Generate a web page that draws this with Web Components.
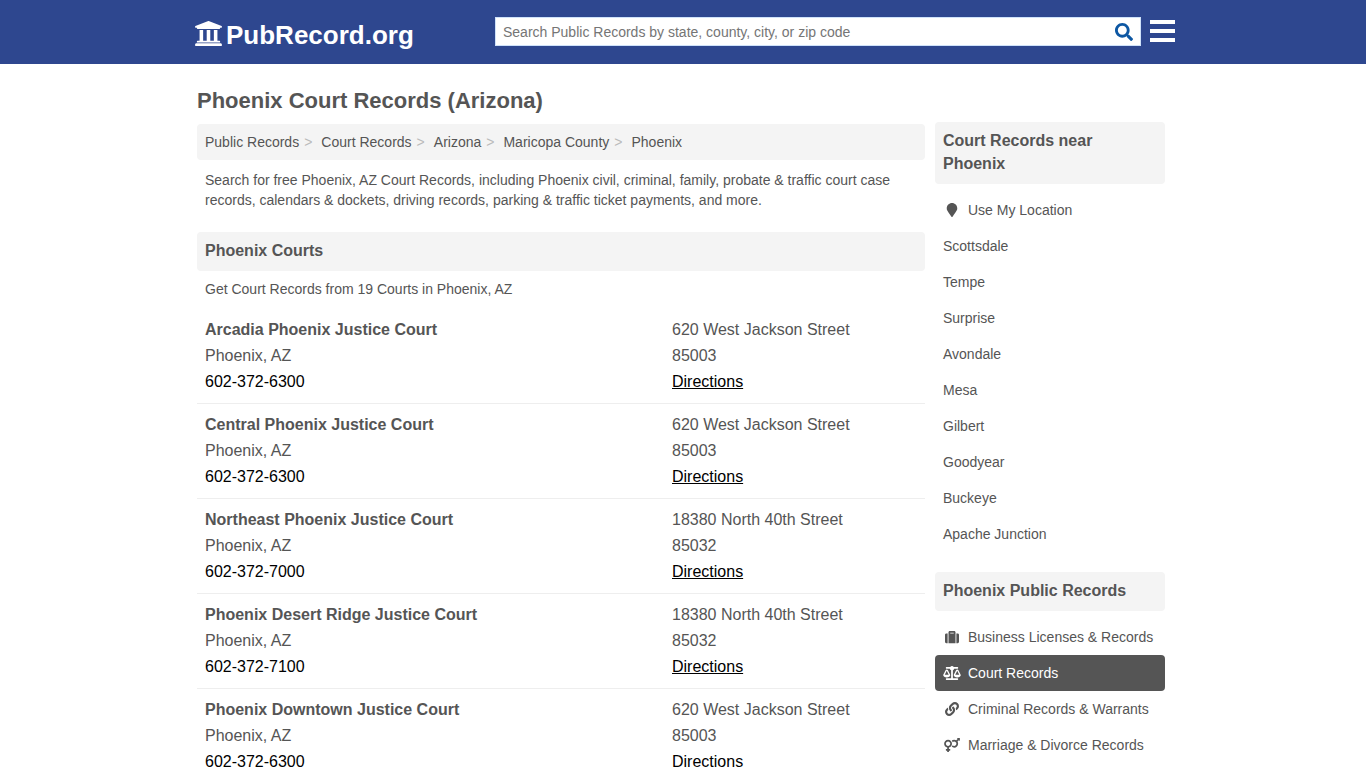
<!DOCTYPE html>
<html lang="en">
<head>
<meta charset="utf-8">
<meta name="viewport" content="width=device-width, initial-scale=1">
<title>Phoenix Court Records (Arizona)</title>
<style>
    body {
        margin: 0;
        background: #fff;
        color: #555;
        font: 14px/20px "Liberation Sans", Arial, sans-serif;
    }
</style>
</head>
<body>
<site-header></site-header>
<page-layout>
    <bread-crumbs items="Public Records|Court Records|Arizona|Maricopa County|Phoenix"></bread-crumbs>
    <text-block>Search for free Phoenix, AZ Court Records, including Phoenix civil, criminal, family, probate &amp; traffic court case records, calendars &amp; dockets, driving records, parking &amp; traffic ticket payments, and more.</text-block>
    <section-title>Phoenix Courts</section-title>
    <text-block compact>Get Court Records from 19 Courts in Phoenix, AZ</text-block>
    <court-row name="Arcadia Phoenix Justice Court" phone="602-372-6300" street="620 West Jackson Street" zip="85003"></court-row>
    <court-row name="Central Phoenix Justice Court" phone="602-372-6300" street="620 West Jackson Street" zip="85003"></court-row>
    <court-row name="Northeast Phoenix Justice Court" phone="602-372-7000" street="18380 North 40th Street" zip="85032"></court-row>
    <court-row name="Phoenix Desert Ridge Justice Court" phone="602-372-7100" street="18380 North 40th Street" zip="85032"></court-row>
    <court-row name="Phoenix Downtown Justice Court" phone="602-372-6300" street="620 West Jackson Street" zip="85003"></court-row>

    <side-menu slot="side">
        <section-title>Court Records near Phoenix</section-title>
        <menu-link icon="marker">Use My Location</menu-link>
        <menu-link>Scottsdale</menu-link>
        <menu-link>Tempe</menu-link>
        <menu-link>Surprise</menu-link>
        <menu-link>Avondale</menu-link>
        <menu-link>Mesa</menu-link>
        <menu-link>Gilbert</menu-link>
        <menu-link>Goodyear</menu-link>
        <menu-link>Buckeye</menu-link>
        <menu-link>Apache Junction</menu-link>
    </side-menu>
    <side-menu slot="side">
        <section-title>Phoenix Public Records</section-title>
        <menu-link icon="suitcase">Business Licenses &amp; Records</menu-link>
        <menu-link icon="scale" active>Court Records</menu-link>
        <menu-link icon="link">Criminal Records &amp; Warrants</menu-link>
        <menu-link icon="venusmars">Marriage &amp; Divorce Records</menu-link>
    </side-menu>
</page-layout>

<script>
// name: [viewBox, path]
const icons = {
    university: ['16 32 480 448', 'M496 128v16a8 8 0 0 1-8 8h-24v12c0 6.627-5.373 12-12 12H60c-6.627 0-12-5.373-12-12v-12H24a8 8 0 0 1-8-8v-16a8 8 0 0 1 4.941-7.392l232-88a7.996 7.996 0 0 1 6.118 0l232 88A8 8 0 0 1 496 128zm-24 304H40c-13.255 0-24 10.745-24 24v16a8 8 0 0 0 8 8h464a8 8 0 0 0 8-8v-16c0-13.255-10.745-24-24-24zM96 192v192H60c-6.627 0-12 5.373-12 12v20h416v-20c0-6.627-5.373-12-12-12h-36V192h-64v192h-64V192h-64v192h-64V192H96z'],
    search: ['0 0 512 512', 'M505 442.7L405.3 343c-4.5-4.5-10.6-7-17-7H372c27.6-35.3 44-79.7 44-128C416 93.1 322.9 0 208 0S0 93.1 0 208s93.1 208 208 208c48.3 0 92.7-16.4 128-44v16.3c0 6.4 2.5 12.5 7 17l99.7 99.7c9.4 9.4 24.6 9.4 33.9 0l28.3-28.3c9.4-9.4 9.4-24.6.1-34zM208 336c-70.7 0-128-57.2-128-128 0-70.7 57.2-128 128-128 70.7 0 128 57.2 128 128 0 70.7-57.2 128-128 128z'],
    marker: ['0 0 384 512', 'M172.268 501.67C26.97 291.031 0 269.413 0 192 0 85.961 85.961 0 192 0s192 85.961 192 192c0 77.413-26.97 99.031-172.268 309.67-9.535 13.774-29.93 13.773-39.464 0z'],
    suitcase: ['0 0 512 512', 'M128 480h256V80c0-26.5-21.5-48-48-48H176c-26.5 0-48 21.5-48 48v400zm64-384h128v32H192V96zm320 80v256c0 26.5-21.5 48-48 48h-48V128h48c26.5 0 48 21.5 48 48zM96 480H48c-26.5 0-48-21.5-48-48V176c0-26.5 21.5-48 48-48h48v352z'],
    scale: ['0 0 640 512', 'M256 336h-.02c0-16.18 1.34-8.73-85.05-181.51-17.65-35.29-68.19-35.36-85.87 0C-2.06 328.75.02 320.33.02 336H0c0 44.18 57.31 80 128 80s128-35.82 128-80zM128 176l72 144H56l72-144zm511.98 160c0-16.18 1.34-8.73-85.05-181.51-17.65-35.29-68.19-35.36-85.87 0-87.12 174.26-85.04 165.84-85.04 181.51H384c0 44.18 57.31 80 128 80s128-35.82 128-80h-.02zM440 320l72-144 72 144H440zm88 128H352V153.25c23.51-10.29 41.16-31.48 46.39-57.25H528c8.84 0 16-7.16 16-16V48c0-8.84-7.16-16-16-16H383.64C369.04 12.68 346.09 0 320 0s-49.04 12.68-63.64 32H112c-8.84 0-16 7.16-16 16v32c0 8.84 7.16 16 16 16h129.61c5.23 25.76 22.87 46.96 46.39 57.25V448H112c-8.84 0-16 7.16-16 16v32c0 8.84 7.16 16 16 16h416c8.84 0 16-7.16 16-16v-32c0-8.84-7.16-16-16-16z'],
    link: ['0 0 512 512', 'M326.612 185.391c59.747 59.809 58.927 155.698.36 214.59-.11.12-.24.25-.36.37l-67.2 67.2c-59.27 59.27-155.699 59.262-214.96 0-59.27-59.26-59.27-155.7 0-214.96l37.106-37.106c9.84-9.84 26.786-3.3 27.294 10.606.648 17.722 3.826 35.527 9.69 52.721 1.986 5.822.567 12.262-3.783 16.612l-13.087 13.087c-28.026 28.026-28.905 73.66-1.155 101.96 28.024 28.579 74.086 28.749 102.325.51l67.2-67.19c28.191-28.191 28.073-73.757 0-101.83-3.701-3.694-7.429-6.564-10.341-8.569a16.037 16.037 0 0 1-6.947-12.606c-.396-10.567 3.348-21.456 11.698-29.806l21.054-21.055c5.521-5.521 14.182-6.199 20.584-1.731a152.482 152.482 0 0 1 20.522 17.197zM467.547 44.449c-59.261-59.262-155.69-59.27-214.96 0l-67.2 67.2c-.12.12-.25.25-.36.37-58.566 58.892-59.387 154.781.36 214.59a152.454 152.454 0 0 0 20.521 17.196c6.402 4.468 15.064 3.789 20.584-1.731l21.054-21.055c8.35-8.35 12.094-19.239 11.698-29.806a16.037 16.037 0 0 0-6.947-12.606c-2.912-2.005-6.64-4.875-10.341-8.569-28.073-28.073-28.191-73.639 0-101.83l67.2-67.19c28.239-28.239 74.3-28.069 102.325.51 27.75 28.3 26.872 73.934-1.155 101.96l-13.087 13.087c-4.35 4.35-5.769 10.79-3.783 16.612 5.864 17.194 9.042 34.999 9.69 52.721.509 13.906 17.454 20.446 27.294 10.606l37.106-37.106c59.271-59.259 59.271-155.699.001-214.959z'],
    venusmars: ['0 0 576 512', 'M564 0h-79c-10.7 0-16 12.9-8.5 20.5l16.9 16.9-48.7 48.7C422.5 72.1 396.2 64 368 64c-33.7 0-64.6 11.6-89.2 30.9 14 16.7 25 36 32.1 57.1 14.5-14.8 34.7-24 57.1-24 44.1 0 80 35.9 80 80s-35.9 80-80 80c-22.3 0-42.6-9.2-57.1-24-7.1 21.1-18 40.4-32.1 57.1 24.5 19.4 55.5 30.9 89.2 30.9 79.5 0 144-64.5 144-144 0-28.2-8.1-54.5-22.1-76.7l48.7-48.7 16.9 16.9c2.4 2.4 5.4 3.5 8.4 3.5 6.2 0 12.1-4.8 12.1-12V12c0-6.6-5.4-12-12-12zM144 64C64.5 64 0 128.5 0 208c0 68.5 47.9 125.9 112 140.4V400H76c-6.6 0-12 5.4-12 12v40c0 6.6 5.4 12 12 12h36v36c0 6.6 5.4 12 12 12h40c6.6 0 12-5.4 12-12v-36h36c6.6 0 12-5.4 12-12v-40c0-6.6-5.4-12-12-12h-36v-51.6c64.1-14.6 112-71.9 112-140.4 0-79.5-64.5-144-144-144zm0 224c-44.1 0-80-35.9-80-80s35.9-80 80-80 80 35.9 80 80-35.9 80-80 80z']
};

const icon = name => {
    const [viewBox, path] = icons[name];
    return `<svg viewBox="${viewBox}" fill="currentColor" aria-hidden="true"><path d="${path}"/></svg>`;
};

// Base class: subclasses only return their markup.
class BaseElement extends HTMLElement {
    constructor() {
        super();
        this.attachShadow({mode: 'open'});
    }

    connectedCallback() {
        const template = document.createElement('template');
        template.innerHTML = this.render();
        this.shadowRoot.replaceChildren(template.content.cloneNode(true));
    }
}

customElements.define('site-header', class extends BaseElement {
    render() {
        return `
            <style>
                :host {
                    display: block;
                    background: #2e478f;
                }

                header {
                    box-sizing: border-box;
                    max-width: 984px;
                    min-height: 64px;
                    margin: 0 auto;
                    padding-left: 4px;
                    display: grid;
                    grid-template-columns: 300px 1fr 25px;
                    align-items: center;
                }

                .logo {
                    display: flex;
                    align-items: center;
                    gap: 4px;
                    padding-top: 6px;
                    color: #fff;
                    font-size: 26px;
                    font-weight: bold;
                    line-height: 32px;
                    text-decoration: none;
                }

                .logo svg {
                    width: 27px;
                    height: 25px;
                    margin-bottom: 3px;
                }

                form {
                    display: flex;
                    box-sizing: border-box;
                    height: 29px;
                    margin: 0 9px 2px 0;
                    padding-top: 2px;
                    border: 1px solid #cfe2fa;
                    background: #fff;
                }

                input {
                    flex: 1;
                    min-width: 0;
                    padding: 0 0 0 7px;
                    border: 0;
                    outline: 0;
                    background: none;
                    font: inherit;
                }

                input::placeholder {
                    color: #757575;
                }

                button {
                    padding: 0;
                    border: 0;
                    background: none;
                    cursor: pointer;
                }

                form button {
                    width: 33px;
                    display: grid;
                    place-content: center;
                    color: #0d57a3;
                }

                form svg {
                    width: 18px;
                    height: 18px;
                }

                .menu {
                    display: grid;
                    gap: 5px;
                    padding-bottom: 3px;
                }

                .menu span {
                    height: 4px;
                    background: #fff;
                }
            </style>
            <header>
                <a class="logo" href="#">${icon('university')}PubRecord.org</a>
                <form role="search">
                    <input type="text" aria-label="Search Public Records" placeholder="Search Public Records by state, county, city, or zip code">
                    <button type="button" aria-label="Search">${icon('search')}</button>
                </form>
                <button class="menu" type="button" aria-label="Menu"><span></span><span></span><span></span></button>
            </header>
        `;
    }
});

customElements.define('page-layout', class extends BaseElement {
    render() {
        return `
            <style>
                :host {
                    box-sizing: border-box;
                    max-width: 980px;
                    margin: 0 auto;
                    padding: 0 8px 0 4px;
                    display: grid;
                    grid-template-columns: minmax(0, 1fr) 230px;
                    gap: 10px;
                }

                h1 {
                    margin: 0;
                    padding: 21px 0 7px;
                    font-size: 22px;
                    line-height: 32px;
                }

                aside {
                    display: grid;
                    align-content: start;
                    gap: 20px;
                    padding-top: 58px;
                }
            </style>
            <main>
                <h1>Phoenix Court Records (Arizona)</h1>
                <slot></slot>
            </main>
            <aside><slot name="side"></slot></aside>
        `;
    }
});

customElements.define('bread-crumbs', class extends BaseElement {
    render() {
        const links = this.getAttribute('items').split('|').map(item => `<li><a href="#">${item}</a></li>`);
        return `
            <style>
                :host {
                    display: block;
                    border-radius: 4px;
                    background: #f4f4f4;
                }

                ol {
                    display: flex;
                    flex-wrap: wrap;
                    margin: 0;
                    padding: 8px;
                    list-style: none;
                }

                a {
                    color: inherit;
                    text-decoration: none;
                }

                li:not(:last-child)::after {
                    content: ">";
                    margin: 0 9px 0 5px;
                    color: #bbb;
                }
            </style>
            <nav aria-label="Breadcrumb"><ol>${links.join('')}</ol></nav>
        `;
    }
});

customElements.define('text-block', class extends BaseElement {
    render() {
        return `
            <style>
                :host {
                    display: block;
                    padding: 10px 8px 22px;
                }

                :host([compact]) {
                    padding: 8px 8px 10px;
                }

                p {
                    margin: 0;
                }
            </style>
            <p><slot></slot></p>
        `;
    }
});

customElements.define('section-title', class extends BaseElement {
    render() {
        return `
            <style>
                :host {
                    display: block;
                    padding: 7px 8px 9px;
                    border-radius: 4px;
                    background: #f4f4f4;
                }

                h2 {
                    margin: 0;
                    font-size: 16px;
                    line-height: 23px;
                }
            </style>
            <h2><slot></slot></h2>
        `;
    }
});

customElements.define('court-row', class extends BaseElement {
    render() {
        const {name, phone, street, zip} = Object.fromEntries([...this.attributes].map(a => [a.name, a.value]));
        return `
            <style>
                :host {
                    display: block;
                    border-bottom: 1px solid #eee;
                    font-size: 16px;
                    line-height: 26px;
                }

                article {
                    display: grid;
                    grid-template-columns: 1fr 245px;
                    padding: 8px;
                }

                h3 {
                    margin: 0;
                    font-size: 16px;
                }

                h3 a {
                    color: #555;
                    text-decoration: none;
                }

                a {
                    color: #000;
                }

                .phone {
                    text-decoration: none;
                }
            </style>
            <article>
                <div>
                    <h3><a href="#">${name}</a></h3>
                    <div>Phoenix, AZ</div>
                    <a class="phone" href="tel:${phone}">${phone}</a>
                </div>
                <div>
                    <div>${street}</div>
                    <div>${zip}</div>
                    <a href="#">Directions</a>
                </div>
            </article>
        `;
    }
});

customElements.define('side-menu', class extends BaseElement {
    render() {
        return `
            <style>
                :host {
                    display: block;
                }

                ::slotted(section-title) {
                    margin-bottom: 8px;
                }
            </style>
            <nav><slot></slot></nav>
        `;
    }
});

customElements.define('menu-link', class extends BaseElement {
    render() {
        const name = this.getAttribute('icon');
        return `
            <style>
                :host {
                    display: block;
                }

                a {
                    display: flex;
                    align-items: center;
                    gap: 7px;
                    padding: 8px;
                    border-radius: 4px;
                    color: inherit;
                    text-decoration: none;
                }

                :host([active]) a {
                    background: #555;
                    color: #fff;
                }

                svg {
                    width: 18px;
                    height: 14px;
                }
            </style>
            <a href="#">${name ? icon(name) : ''}<span><slot></slot></span></a>
        `;
    }
});
</script>
</body>
</html>
